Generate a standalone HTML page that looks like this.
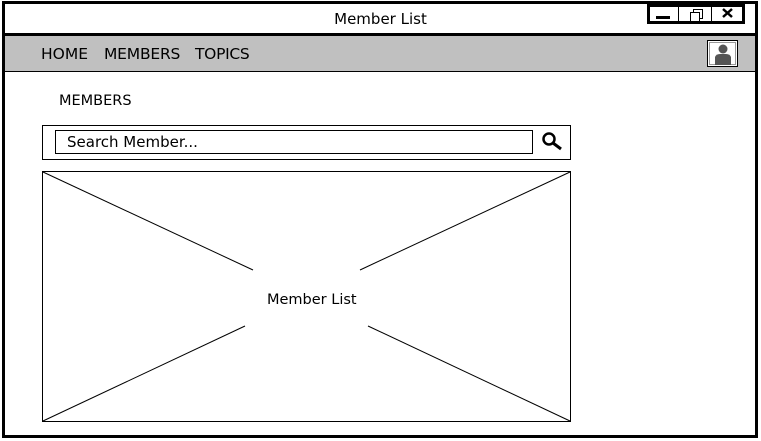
<!DOCTYPE html>
<html><head><style>
body{margin:0;width:761px;height:441px;background:#fff;overflow:hidden;font-family:"DejaVu Sans","Liberation Sans",sans-serif;}
svg{position:absolute;left:0;top:0}
.t{position:absolute;font-size:15px;color:#000;white-space:nowrap}
</style></head><body>
<svg width="761" height="441">
<rect x="0" y="0" width="761" height="441" fill="#fff"/>
<rect x="5" y="35" width="750" height="36" fill="#c0c0c0"/>
<line x1="5" y1="71.5" x2="755" y2="71.5" stroke="#000" stroke-width="1"/>
<rect x="3.5" y="2.5" width="753" height="434" fill="none" stroke="#000" stroke-width="3"/>
<line x1="3" y1="34.5" x2="757" y2="34.5" stroke="#000" stroke-width="3"/>
<rect x="648.5" y="5.5" width="95" height="17" fill="#fff" stroke="#000" stroke-width="3"/>
<line x1="678.5" y1="6" x2="678.5" y2="22" stroke="#000"/>
<line x1="711.5" y1="6" x2="711.5" y2="22" stroke="#000"/>
<rect x="656" y="16" width="14" height="3" fill="#000"/>
<rect x="693.5" y="9.5" width="9" height="9" fill="#fff" stroke="#000"/>
<rect x="690.5" y="12.5" width="9" height="9" fill="#fff" stroke="#000"/>
<path d="M723 9 L732 17 M732 9 L723 17" stroke="#000" stroke-width="2.5"/>
<rect x="707.5" y="40.5" width="30" height="26" fill="#fff" stroke="#000"/>
<rect x="709.5" y="42.5" width="26" height="22" fill="none" stroke="#999"/>
<circle cx="723" cy="49" r="4.5" fill="#555"/>
<path d="M715 65 L715 57 Q716 54 720 54 L726 54 Q730 54 731 57 L731 65 Z" fill="#555"/>
<rect x="42.5" y="125.5" width="528" height="34" fill="none" stroke="#000"/>
<rect x="55.5" y="130.5" width="477" height="23" fill="none" stroke="#000"/>
<circle cx="549" cy="139" r="5.5" fill="none" stroke="#000" stroke-width="2.5"/>
<line x1="553" y1="143" x2="561" y2="149" stroke="#000" stroke-width="3"/>
<rect x="42.5" y="171.5" width="528" height="250" fill="none" stroke="#000"/>
<line x1="43" y1="172" x2="253" y2="270" stroke="#000"/>
<line x1="570" y1="172" x2="360" y2="270" stroke="#000"/>
<line x1="43" y1="421" x2="245" y2="326" stroke="#000"/>
<line x1="570" y1="421" x2="368" y2="326" stroke="#000"/>
</svg>
<div class="t" style="left:0;width:761px;text-align:center;top:10px;font-size:15px">Member List</div>
<div class="t" style="left:41px;top:45px;font-size:15.5px">HOME</div>
<div class="t" style="left:104px;top:45px;font-size:15.5px;letter-spacing:-0.2px">MEMBERS</div>
<div class="t" style="left:195px;top:45px;font-size:15.5px;letter-spacing:-0.3px">TOPICS</div>
<div class="t" style="left:59px;top:93px;font-size:14.5px">MEMBERS</div>
<div class="t" style="left:67px;top:133px;font-size:15px">Search Member...</div>
<div class="t" style="left:267px;top:292px;font-size:14.5px">Member List</div>
</body></html>
